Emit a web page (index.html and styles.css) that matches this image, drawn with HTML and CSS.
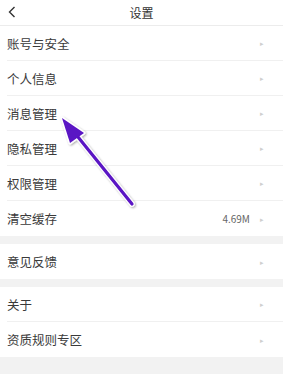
FILE: index.html
```html
<!DOCTYPE html>
<html lang="zh">
<head>
    <meta charset="UTF-8">
    <meta name="viewport" content="width=device-width, initial-scale=1.0">
    <title>设置</title>
    <link rel="stylesheet" href="styles.css">
</head>
<body>

    <div class="page">
        <!-- Top bar -->
        <div class="top-bar">
            <svg class="back" width="8" height="12" viewBox="0 0 8 12">
                <path d="M6.5 1 L1.5 6 L6.5 11" fill="none" stroke="#333" stroke-width="1.4"/>
            </svg>
            <div class="title">设置</div>
        </div>

        <div class="group">
            <div class="row"><span class="label">账号与安全</span><span class="arrow">&#9656;</span></div>
            <div class="row"><span class="label">个人信息</span><span class="arrow">&#9656;</span></div>
            <div class="row"><span class="label">消息管理</span><span class="arrow">&#9656;</span></div>
            <div class="row"><span class="label">隐私管理</span><span class="arrow">&#9656;</span></div>
            <div class="row"><span class="label">权限管理</span><span class="arrow">&#9656;</span></div>
            <div class="row"><span class="label">清空缓存</span><span class="value">4.69M</span><span class="arrow">&#9656;</span></div>
        </div>

        <div class="group">
            <div class="row"><span class="label">意见反馈</span><span class="arrow">&#9656;</span></div>
        </div>

        <div class="group">
            <div class="row"><span class="label">关于</span><span class="arrow">&#9656;</span></div>
            <div class="row"><span class="label">资质规则专区</span><span class="arrow">&#9656;</span></div>
        </div>

        <!-- Annotation arrow over the list -->
        <svg class="pointer" width="283" height="374" viewBox="0 0 283 374">
            <defs>
                <filter id="shadow" x="-20%" y="-20%" width="140%" height="140%">
                    <feDropShadow dx="1" dy="1" stdDeviation="1.2" flood-color="#000" flood-opacity="0.35"/>
                </filter>
            </defs>
            <g filter="url(#shadow)">
                <line x1="132" y1="204" x2="74" y2="132" stroke="#fff" stroke-width="5.5" stroke-linecap="round"/>
                <polygon points="62,118 84,133 70,143" fill="#fff" stroke="#fff" stroke-width="3" stroke-linejoin="round"/>
                <line x1="132" y1="204" x2="74" y2="132" stroke="#5a12c4" stroke-width="3.2" stroke-linecap="round"/>
                <polygon points="62,118 84,133 70,143" fill="#5a12c4"/>
            </g>
        </svg>
    </div>

</body>
</html>
```

FILE: styles.css
```css
* {
    margin: 0;
    padding: 0;
    box-sizing: border-box;
}

body {
    font-family: 'Noto Sans CJK SC', 'Liberation Sans', sans-serif;
    background-color: #f2f2f2;
    width: 283px;
    height: 374px;
    overflow: hidden;
}

.page {
    position: relative;
    height: 374px;
}

.top-bar {
    position: relative;
    height: 26px;
    background-color: #ffffff;
    border-bottom: 1px solid #ececec;
    display: flex;
    align-items: center;
    justify-content: center;
}

.back {
    position: absolute;
    left: 8px;
    top: 6px;
}

.title {
    font-size: 12px;
    color: #333;
}

.group {
    background-color: #ffffff;
    padding-left: 7px;
    margin-bottom: 8px;
}

.row {
    height: 35px;
    display: flex;
    align-items: center;
    border-bottom: 1px solid #f0f0f0;
    padding-right: 19px;
}

.row:last-child {
    border-bottom: none;
}

.label {
    flex: 1;
    font-size: 12.5px;
    color: #3a3a3a;
}

.value {
    font-size: 10px;
    color: #666;
    margin-right: 10px;
}

.arrow {
    font-size: 7px;
    color: #cfcfcf;
}

.pointer {
    position: absolute;
    left: 0;
    top: 0;
    pointer-events: none;
}
```
